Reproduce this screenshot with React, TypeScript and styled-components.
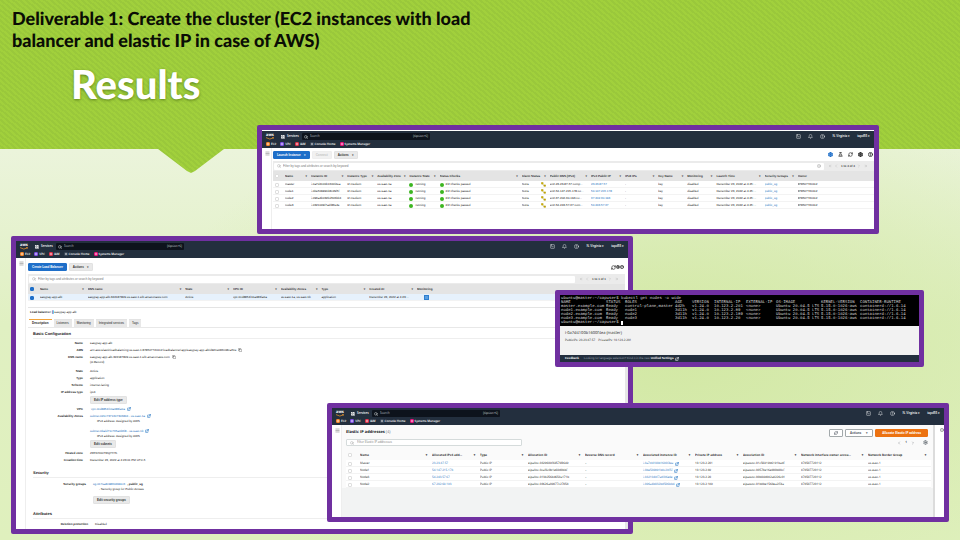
import React from "react";
import styled, { createGlobalStyle, css } from "styled-components";
import {
  Bell,
  ChevronLeft,
  ChevronRight,
  ChevronsLeft,
  ChevronsRight,
  CircleHelp,
  Copy,
  ExternalLink,
  FlaskConical,
  Info,
  LayoutGrid,
  Menu,
  RefreshCw,
  Search,
  Settings,
  SquareTerminal,
  CircleX,
} from "lucide-react";

const purple = "#7030a0";
const navy = "#232f3e";
const sans = '"Liberation Sans", Arial, sans-serif';
const open = '"Open Sans", "Noto Sans", sans-serif';
const mono = '"Liberation Mono", "Courier New", monospace';

const GlobalStyle = createGlobalStyle`
  *, *::before, *::after { box-sizing: border-box; }
  body { margin: 0; font-family: ${sans}; text-rendering: geometricPrecision; }
  button, input { font: inherit; color: inherit; margin: 0; padding: 0; border: 0; background: none; }
  svg { flex: none; display: block; }
  a { text-decoration: none; }
`;

const Slide = styled.main`
  position: relative;
  min-height: 100vh;
  overflow: hidden;
  background:
    radial-gradient(ellipse at 70% 65%, #d2e8a4 0%, rgba(210, 232, 164, 0) 55%),
    linear-gradient(180deg, #ebf4db 28%, #e0f0c2 60%, #dff0bd 100%);
`;

const Banner = styled.header`
  height: 173px;
  padding: 7px 12px;
  background: repeating-linear-gradient(40deg, #9ac83b 0 2px, #a1d03c 2px 4px);
  clip-path: polygon(0 0, 100% 0, 100% 149px, 224px 149px, 195px 171px, 191px 173px, 187px 171px, 158px 149px, 0 149px);
`;

const Deliverable = styled.p`
  margin: 0;
  max-width: 480px;
  font: 900 18px/22px Lato, sans-serif;
  color: #0a0d05;
`;

const Title = styled.h1`
  margin: 8px 0 0 59px;
  font: 900 40px/50px Lato, sans-serif;
  color: #fff;
  text-shadow: 0 1px 3px rgba(50, 80, 0, 0.6);
`;

const Shot = styled.section<{ $top: number; $left: number; $right: number; $min: number; $z?: number; $inset?: number }>`
  position: absolute;
  top: ${(p) => p.$top}px;
  left: ${(p) => p.$left}px;
  right: ${(p) => p.$right}px;
  min-height: ${(p) => p.$min}px;
  z-index: ${(p) => p.$z ?? 1};
  display: flex;
  flex-direction: column;
  padding-top: ${(p) => p.$inset ?? 0}px;
  border: 5px solid ${purple};
  border-radius: 2px;
  background: #fff;
  font-size: 3px;
  line-height: 5px;
  color: #222;
  overflow: hidden;
`;

/* Console navigation */
const Nav = styled.nav`
  height: 17px;
  padding: 2px 4px 0;
  background: ${navy};
  color: #fff;
  font-family: ${open};
  font-weight: 600;
`;

const NavRow = styled.div`
  display: flex;
  align-items: center;
  height: 7px;
`;

const Logo = styled.a`
  display: flex;
  flex-direction: column;
  width: 15px;
  color: #fff;
  font: 700 4px/3px ${open};
`;

const Services = styled.button`
  display: flex;
  align-items: center;
  gap: 2px;
  width: 21px;
`;

const NavSearch = styled.label`
  display: flex;
  align-items: center;
  gap: 2px;
  width: 128px;
  height: 7px;
  padding: 0 2px;
  border-radius: 1px;
  background: #0d131c;
  color: #d5dbdb;
  font-weight: 400;
  input { flex: 1; min-width: 0; height: 5px; outline: 0; }
  input::placeholder { color: #b4bbc4; opacity: 1; }
`;

const NavRight = styled.div`
  display: flex;
  align-items: center;
  gap: 7px;
  margin-left: auto;
`;

const NavButton = styled.button`
  display: block;
  white-space: nowrap;
`;

const Favourites = styled.div`
  display: flex;
  align-items: center;
  gap: 4px;
  height: 8px;
`;

const Favourite = styled.a`
  display: flex;
  align-items: center;
  gap: 1px;
  color: #fff;
  white-space: nowrap;
`;

const Chip = styled.span<{ $c: string }>`
  width: 4px;
  height: 4px;
  border-radius: 1px;
  background: ${(p) => p.$c};
  border: 1px solid ${(p) => p.$c};
  box-shadow: inset 0 0 0 1px rgba(255, 255, 255, 0.45);
`;

function ConsoleNav() {
  return (
    <Nav>
      <NavRow>
        <Logo href="#" aria-label="aws home">
          <span>aws</span>
          <svg width="8" height="3" viewBox="0 0 8 3">
            <path d="M0 .6Q4 3.4 7.2.9M6 .4l1.5 0-.3 1.4" fill="none" stroke="#f29a2e" strokeWidth=".7" />
          </svg>
        </Logo>
        <Services>
          <LayoutGrid size={4} strokeWidth={4} />
          Services
        </Services>
        <NavSearch>
          <Search size={4} strokeWidth={3} />
          <input placeholder="Search" aria-label="Search services" />
          [Option+S]
        </NavSearch>
        <NavRight>
          <NavButton aria-label="CloudShell"><SquareTerminal size={5} /></NavButton>
          <NavButton aria-label="Notifications"><Bell size={5} /></NavButton>
          <NavButton aria-label="Help"><CircleHelp size={5} /></NavButton>
          <NavButton>N. Virginia ▾</NavButton>
          <NavButton>tapd55 ▾</NavButton>
        </NavRight>
      </NavRow>
      <Favourites>
        <Favourite href="#"><Chip $c="#f0852c" />EC2</Favourite>
        <Favourite href="#"><Chip $c="#7d4fe0" />VPC</Favourite>
        <Favourite href="#"><Chip $c="#dd344c" />IAM</Favourite>
        <Favourite href="#"><Chip $c="#3b4858" />Console Home</Favourite>
        <Favourite href="#"><Chip $c="#e7157b" />Systems Manager</Favourite>
      </Favourites>
    </Nav>
  );
}

/* Page body */
const Body = styled.div`
  flex: 1;
  display: flex;
`;

const Rail = styled.aside`
  width: 10px;
  padding: 3px 0 0 3px;
  border-right: 1px solid #eee;
  background: #fff;
  color: #555;
`;

const Content = styled.div<{ $pad?: number }>`
  flex: 1;
  min-width: 0;
  padding-left: ${(p) => p.$pad ?? 1}px;
`;

const Toolbar = styled.div<{ $top: number; $h: number }>`
  display: flex;
  align-items: center;
  gap: 2px;
  height: ${(p) => p.$h}px;
  padding: ${(p) => p.$top}px 1px 0 0;
`;

const Button = styled.button<{ $kind?: "blue" | "orange" | "outline" | "off" }>`
  display: flex;
  align-items: center;
  justify-content: center;
  gap: 3px;
  height: 8px;
  padding: 0 3px;
  border: 1px solid #e2e2e2;
  border-radius: 1px;
  background: #e9e9e9;
  color: #333;
  font-weight: 700;
  line-height: 6px;
  white-space: nowrap;
  ${(p) => p.$kind === "blue" && css`background: #1f6fc9; border-color: #1f6fc9; color: #fff;`}
  ${(p) => p.$kind === "off" && css`background: #f1f1f1; border-color: #eee; color: #c4c4c4;`}
  ${(p) => p.$kind === "outline" && css`background: #fff; border-color: #a3a9ab; color: #545b64; gap: 4px; padding: 0 4px;`}
  ${(p) => p.$kind === "orange" && css`background: #ec7211; border-color: #ec7211; color: #fff; padding: 0 6px;`}
`;

const Tools = styled.div<{ $gap: number }>`
  display: flex;
  align-items: center;
  gap: ${(p) => p.$gap}px;
  margin-left: auto;
  color: #333;
  button { display: block; }
`;

const FilterBar = styled.div`
  display: flex;
  align-items: center;
  height: 10px;
  padding: 0 6px 0 1px;
  background: #ebebeb;
`;

const Filter = styled.label`
  flex: 1;
  display: flex;
  align-items: center;
  gap: 2px;
  height: 7px;
  padding: 0 3px;
  border-radius: 1px;
  background: #fff;
  color: #888;
  input { flex: 1; min-width: 0; height: 5px; outline: 0; }
  input::placeholder { color: #777; opacity: 1; }
`;

const Pager = styled.div`
  display: flex;
  align-items: center;
  justify-content: space-between;
  width: 44px;
  padding-left: 4px;
  color: #aaa;
  button { display: block; }
  strong { color: #444; }
`;

const Table = styled.table<{ $look?: "new" }>`
  width: 100%;
  table-layout: fixed;
  border-collapse: collapse;
  th, td { padding: 0; text-align: left; white-space: nowrap; overflow: hidden; }
  th { height: 10px; background: ${(p) => (p.$look ? "#fafafa" : "#e4e4e4")}; color: #333; }
  td { height: 7px; background: #fff; box-shadow: inset 0 -1px #f3f3f3; }
  tr[aria-selected="true"] td { background: #e6f1fc; }
  td a, td a:visited { color: #1f73c0; }
`;

const Col = styled.col<{ $part: number }>`
  width: ${(p) => p.$part}%;
`;

const Cell = styled.div<{ $spread?: boolean }>`
  display: flex;
  align-items: center;
  gap: 2px;
  line-height: 5px;
  padding-right: 4px;
  justify-content: ${(p) => (p.$spread ? "space-between" : "flex-start")};
`;

const Tick = styled.input`
  appearance: none;
  display: block;
  width: 4px;
  height: 4px;
  margin-left: 2px;
  border: 1px solid #dedede;
  border-radius: 1px;
  background: #fff;
  &:checked { background: #1f6fc9; border-color: #1f6fc9; }
`;

const MonitorBox = styled.button`
  width: 5px;
  height: 5px;
  margin-left: 7px;
  border: 1px solid #2f7fd0;
  background: #5b9fe0;
`;

const Dot = styled.span`
  width: 4px;
  height: 4px;
  border-radius: 50%;
  background: #3cb521;
`;

function Grid(props: {
  label: string;
  widths: number[];
  heads: string[];
  rows: React.ReactNode[][];
  look?: "new";
  checked?: boolean;
}) {
  const total = props.widths.reduce((a, b) => a + b, 0);
  return (
    <Table $look={props.look} aria-label={props.label}>
      <colgroup>
        {props.widths.map((w, i) => <Col key={i} $part={(w / total) * 100} />)}
      </colgroup>
      <thead>
        <tr>
          <th><Tick type="checkbox" aria-label="Select all" defaultChecked={props.checked} /></th>
          {props.heads.map((h) => (
            <th key={h}><Cell $spread>{h}{h !== "Owner" && h !== "Monitoring" || props.look ? <span>{props.look ? "▼" : "▾"}</span> : null}</Cell></th>
          ))}
        </tr>
      </thead>
      <tbody>
        {props.rows.map((r, i) => (
          <tr key={i} aria-selected={!!props.checked}>
            <td><Tick type="checkbox" aria-label={"Select row " + (i + 1)} defaultChecked={props.checked} /></td>
            {r.map((c, j) => <td key={j}>{typeof c === "string" ? <Cell>{c}</Cell> : c}</td>)}
          </tr>
        ))}
      </tbody>
    </Table>
  );
}

const AlarmIcon = () => (
  <svg width="5" height="5" viewBox="0 0 6 6">
    <path d="M.5.5h2v2h-2zM2 2.500l2 2M3.500 3.500h2v1.700h-2z" fill="#e0bf00" stroke="#a8920a" strokeWidth=".6" />
  </svg>
);

const ok = (t: string) => <Cell><Dot />{t}</Cell>;
const link = (t: string, out?: boolean) => (
  <Cell><a href="#">{t}</a>{out && <ExternalLink size={4} strokeWidth={3} color="#1f73c0" />}</Cell>
);

const instances = [
  ["master", "i-0a7d4100b1600f4ea", "ec2-23-23-87-57.comp...", "23.23.87.57"],
  ["node1", "i-0be509991b8c29f5f", "ec2-54-147-215-178.co...", "54.147.215.178"],
  ["node2", "i-096a4b032bd506bb4", "ec2-67-202-60-193.co...", "67.202.60.193"],
  ["node3", "i-0321049f7adf86e4e", "ec2-54-243-57-67.com...", "54.243.57.67"],
].map(([name, id, dns, ip]) => [
  name,
  id,
  "t2.medium",
  "us-east-1a",
  ok("running"),
  ok("2/2 checks passed"),
  <Cell $spread>None<AlarmIcon /></Cell>,
  dns,
  link(ip),
  "-",
  "key",
  "disabled",
  "December 23, 2022 at 4:45:...",
  link("public_sg"),
  "878507720112",
]);

const PagerControls = ({ text }: { text: string }) => (
  <Pager>
    <button aria-label="First page"><ChevronsLeft size={4} /></button>
    <button aria-label="Previous page"><ChevronLeft size={4} /></button>
    <strong>{text}</strong>
    <button aria-label="Next page"><ChevronRight size={4} /></button>
    <button aria-label="Last page"><ChevronsRight size={4} /></button>
  </Pager>
);

function Instances() {
  return (
    <Shot $top={125} $left={257} $right={81} $min={109} $inset={1} aria-label="EC2 instances">
      <ConsoleNav />
      <Body>
        <Rail><Menu size={5} /></Rail>
        <Content>
          <Toolbar $top={0} $h={13}>
            <Button $kind="blue">Launch Instance <span>▾</span></Button>
            <Button $kind="off">Connect</Button>
            <Button>Actions <span>▾</span></Button>
            <Tools $gap={5}>
              <button aria-label="Preferences"><Settings size={5} strokeWidth={5} color="#1f6fc9" /></button>
              <button aria-label="Experiments"><FlaskConical size={5} strokeWidth={3} /></button>
              <button aria-label="Refresh"><RefreshCw size={5} strokeWidth={3} /></button>
              <button aria-label="Settings"><Settings size={5} strokeWidth={5} /></button>
              <button aria-label="Help"><CircleHelp size={5} strokeWidth={4} /></button>
            </Tools>
          </Toolbar>
          <FilterBar>
            <Filter>
              <Search size={4} />
              <input placeholder="Filter by tags and attributes or search by keyword" aria-label="Filter instances" />
              <CircleX size={4} />
            </Filter>
            <PagerControls text="1 to 4 of 4" />
          </FilterBar>
          <Grid
            label="Instances"
            widths={[12, 26, 36, 30, 32, 30, 82, 28, 41, 34, 33, 29, 29, 48, 33, 76]}
            heads={["Name", "Instance ID", "Instance Type", "Availability Zone", "Instance State", "Status Checks", "Alarm Status", "Public DNS (IPv4)", "IPv4 Public IP", "IPv6 IPs", "Key Name", "Monitoring ", "Launch Time", "Security Groups", "Owner"]}
            rows={instances}
          />
        </Content>
      </Body>
    </Shot>
  );
}

/* Load balancer detail */
const Splitter = styled.div`
  margin-top: 6px;
  border-top: 1px solid #e4e4e4;
`;

const LbTitle = styled.p`
  margin: 2px 0 4px 2px;
  i { color: #1f73c0; }
`;

const Tabs = styled.div`
  display: flex;
  gap: 2px;
  padding-left: 1px;
  border-bottom: 1px solid #e8e8e8;
`;

const Tab = styled.button<{ $on?: boolean }>`
  height: 8px;
  padding: 0 3px;
  border-top: 1px solid ${(p) => (p.$on ? "#f2a33a" : "#e3e3e3")};
  background: ${(p) => (p.$on ? "#fff" : "#e8e8e8")};
  font-weight: ${(p) => (p.$on ? 700 : 400)};
  line-height: 7px;
`;

const SectionTitle = styled.h2<{ $above?: number; $below?: number }>`
  margin: ${(p) => p.$above ?? 3}px 0 ${(p) => p.$below ?? 2}px 5px;
  padding-bottom: 1px;
  border-bottom: 1px solid #eee;
  font-size: 4px;
  line-height: 6px;
`;

const Facts = styled.dl<{ $label: number }>`
  display: grid;
  grid-template-columns: ${(p) => p.$label}px 1fr;
  gap: 2px 7px;
  margin: 0;
  dt { text-align: right; font-weight: 700; }
  dd { margin: 0; }
  a { color: #1f73c0; }
`;

const Line = styled.div<{ $in?: number; $after?: number }>`
  display: flex;
  gap: 2px;
  padding-left: ${(p) => p.$in ?? 0}px;
  margin-bottom: ${(p) => p.$after ?? 0}px;
`;

const EditButton = styled(Button)`
  margin: 1px 0;
`;

const Scroll = styled.div`
  width: 3px;
  margin-top: 50px;
  background: #e6e6e6;
`;

const out = <ExternalLink size={4} strokeWidth={3} color="#1f73c0" />;

function LoadBalancer() {
  return (
    <Shot $top={236} $left={11} $right={327} $min={298} aria-label="Load balancer">
      <ConsoleNav />
      <Body>
        <Rail><Menu size={5} /></Rail>
        <Content $pad={2}>
          <Toolbar $top={2} $h={16}>
            <Button $kind="blue">Create Load Balancer</Button>
            <Button>Actions <span>▾</span></Button>
            <Tools $gap={0}>
              <button aria-label="Refresh"><RefreshCw size={5} strokeWidth={3} /></button>
              <button aria-label="Settings"><Settings size={4} strokeWidth={5} /></button>
              <button aria-label="Help"><CircleHelp size={4} strokeWidth={4} /></button>
            </Tools>
          </Toolbar>
          <FilterBar>
            <Filter>
              <Search size={4} />
              <input placeholder="Filter by tags and attributes or search by keyword" aria-label="Filter load balancers" />
            </Filter>
            <PagerControls text="1 to 1 of 1" />
          </FilterBar>
          <Grid
            label="Load balancers"
            checked
            widths={[12, 48, 98, 48, 48, 41, 48, 48, 209]}
            heads={["Name", "DNS name", "State", "VPC ID", "Availability Zones", "Type", "Created At", "Monitoring"]}
            rows={[[
              "easypay-app-alb",
              "easypay-app-alb-322187809.us-east-1.elb.amazonaws.com",
              "Active",
              "vpc-0cd8854f10a483fa0a",
              "us-east-1a, us-east-1b",
              "application",
              "December 23, 2022 at 4:23:...",
              <Cell><MonitorBox aria-label="Open monitoring" /></Cell>,
            ]]}
          />
          <Splitter />
          <LbTitle><b>Load balancer:</b> <i>▌</i>easypay-app-alb</LbTitle>
          <Tabs role="tablist">
            <Tab role="tab" $on aria-selected>Description</Tab>
            <Tab role="tab">Listeners</Tab>
            <Tab role="tab">Monitoring</Tab>
            <Tab role="tab">Integrated services</Tab>
            <Tab role="tab">Tags</Tab>
          </Tabs>
          <SectionTitle>Basic Configuration</SectionTitle>
          <Facts $label={55}>
            <dt>Name</dt><dd>easypay-app-alb</dd>
            <dt>ARN</dt>
            <dd><Line>arn:aws:elasticloadbalancing:us-east-1:878507720112:loadbalancer/app/easypay-app-alb/d921e086c08ca51e<Copy size={4} /></Line></dd>
            <dt>DNS name</dt>
            <dd>
              <Line>easypay-app-alb-322187809.us-east-1.elb.amazonaws.com<Copy size={4} /></Line>
              <Line $after={2}>(A Record)</Line>
            </dd>
            <dt>State</dt><dd>Active</dd>
            <dt>Type</dt><dd>application</dd>
            <dt>Scheme</dt><dd>internet-facing</dd>
            <dt>IP address type</dt><dd>ipv4<EditButton>Edit IP address type</EditButton></dd>
            <dt>VPC</dt><dd><Line $in={1}><a href="#">vpc-0cd8854f10a483fa0a</a>{out}</Line></dd>
            <dt>Availability Zones</dt>
            <dd>
              <Line><a href="#">subnet-021c7371607306844 - us-east-1a</a>{out}</Line>
              <Line $in={7} $after={5}>IPv4 address: Assigned by AWS</Line>
              <Line><a href="#">subnet-0bafd71c765a0b6f8 - us-east-1b</a>{out}</Line>
              <Line $in={7}>IPv4 address: Assigned by AWS</Line>
              <EditButton>Edit subnets</EditButton>
            </dd>
            <dt>Hosted zone</dt><dd>Z35SXDOTRQ7X7K</dd>
            <dt>Creation time</dt><dd>December 23, 2022 at 4:23:01 PM UTC-5</dd>
          </Facts>
          <SectionTitle $above={7} $below={4}>Security</SectionTitle>
          <Facts $label={58}>
            <dt>Security groups</dt>
            <dd>
              <Line><a href="#">sg-017ea8c98604991c6</a><b>, public_sg</b></Line>
              <Line $in={6} $after={4}>- Security group for Public Access</Line>
              <EditButton>Edit security groups</EditButton>
            </dd>
          </Facts>
          <SectionTitle $above={6} $below={3}>Attributes</SectionTitle>
          <Facts $label={60}>
            <dt>Deletion protection</dt><dd>Disabled</dd>
          </Facts>
        </Content>
        <Scroll />
      </Body>
    </Shot>
  );
}

/* Terminal */
const Screen = styled.div`
  height: 31px;
  padding: 2px 0 0 1px;
  background: #000;
  color: #d8d8d8;
  font: 4px/4px ${mono};
  table { width: 100%; table-layout: fixed; border-collapse: collapse; }
  th, td { padding: 0; height: 4px; text-align: left; font-weight: 400; white-space: nowrap; }
`;

const Prompt = styled.div`
  display: flex;
  gap: 2px;
`;

const Cursor = styled.span`
  width: 2px;
  height: 4px;
  background: #fff;
`;

const Session = styled.div`
  flex: 1;
  min-height: 29px;
  padding: 5px;
  background: #f2f2f2;
  font-family: ${open};
  h2 { margin: 0 0 2px; font-size: 4px; line-height: 5px; font-weight: 400; }
  p { margin: 0; display: flex; gap: 3px; }
`;

const Footer = styled.footer`
  display: flex;
  align-items: center;
  gap: 5px;
  height: 7px;
  padding: 0 5px;
  background: ${navy};
  color: #9aa4b0;
  a { color: #fff; font-weight: 700; }
  p { display: flex; align-items: center; gap: 1px; margin: 0; }
`;

const nodeWidths = [45, 19, 50, 17, 22, 32, 30, 45, 39, 59];
const nodeHeads = ["NAME", "STATUS", "ROLES", "AGE", "VERSION", "INTERNAL-IP", "EXTERNAL-IP", "OS-IMAGE", "KERNEL-VERSION", "CONTAINER-RUNTIME"];
const nodes = [
  ["master", "control-plane,master", "4d2h", "10.123.2.201"],
  ["node1", "node1", "3d11h", "10.123.2.89"],
  ["node2", "node2", "3d11h", "10.123.2.189"],
  ["node3", "node3", "3d11h", "10.123.2.20"],
];

function Terminal() {
  return (
    <Shot $top={290} $left={555} $right={36} $min={77} $z={2} aria-label="Terminal session">
      <Screen>
        <Prompt>ubuntu@master:~/capuser$ kubectl get nodes -o wide</Prompt>
        <table>
          <colgroup>{nodeWidths.map((w, i) => <Col key={i} $part={(w / 358) * 100} />)}</colgroup>
          <thead><tr>{nodeHeads.map((h) => <th key={h}>{h}</th>)}</tr></thead>
          <tbody>
            {nodes.map(([n, role, age, ip]) => (
              <tr key={n}>
                <td>{n}.example.com</td><td>Ready</td><td>{role}</td><td>{age}</td><td>v1.24.0</td><td>{ip}</td>
                <td>&lt;none&gt;</td><td>Ubuntu 20.04.5 LTS</td><td>5.15.0-1026-aws</td><td>containerd://1.6.14</td>
              </tr>
            ))}
          </tbody>
        </table>
        <Prompt>ubuntu@master:~/capuser$ <Cursor /></Prompt>
      </Screen>
      <Session>
        <h2>i-0a7d4100b1600f4ea (master)</h2>
        <p><span>PublicIPs: 23.23.87.57</span><span>PrivateIPs: 10.123.2.201</span></p>
      </Session>
      <Footer>
        <a href="#">Feedback</a>
        <p>Looking for language selection? Find it in the new <a href="#">Unified Settings</a><ExternalLink size={4} strokeWidth={3} color="#fff" /></p>
      </Footer>
    </Shot>
  );
}

/* Elastic IPs */
const IpContent = styled(Content)`
  padding-left: 0;
  background: #f2f3f3;
  font-family: ${open};
`;

const IpPanel = styled.div`
  padding: 3px 2px 0 4px;
  background: #fafafa;
`;

const IpHead = styled.div`
  display: flex;
  align-items: center;
  gap: 2px;
  height: 9px;
  padding-right: 3px;
  h2 { flex: 1; margin: 0; font-size: 4px; line-height: 6px; color: #16191f; }
  h2 span { font-weight: 400; color: #687078; }
`;

const IpFilterRow = styled.div`
  display: flex;
  align-items: center;
  justify-content: space-between;
  height: 13px;
  padding: 0 3px 2px 0;
`;

const IpFilter = styled(Filter)`
  flex: 0 1 176px;
  border: 1px solid #d5dbdb;
  gap: 3px;
`;

const IpPager = styled.div`
  display: flex;
  align-items: center;
  gap: 4px;
  color: #545b64;
  button { display: block; }
  button:last-child { margin-left: 4px; }
`;

const InfoRail = styled.aside`
  width: 11px;
  padding: 3px 0 0 5px;
  border-left: 2px solid #dcdcdc;
  background: #fff;
`;

const addresses = [
  ["Master", "23.23.87.57", "eipalloc-0329609f69579B649", "i-0a7d4100b1600f4ea", "10.123.2.201", "eipassoc-01c56919b6191badf"],
  ["Node1", "54.147.215.178", "eipalloc-0caf6c0b1e60d0bbf", "i-0be509991b8c29f5f", "10.123.2.89", "eipassoc-00578e16e000b00cf"],
  ["Node3", "54.243.57.67", "eipalloc-013b256b4650a171b", "i-0321049f7adf86e4e", "10.123.2.20", "eipassoc-00b04d082a8226c01"],
  ["Node2", "67.202.60.193", "eipalloc-03626a09077c27058", "i-096a4b032bd506bb4", "10.123.2.189", "eipassoc-01b8be1560ea2ff4a"],
].map(([name, ip, alloc, inst, priv, assoc]) => [
  name, link(ip), "Public IP", alloc, "–", link(inst, true), priv, assoc, "878507720112", "us-east-1",
]);

function ElasticIps() {
  return (
    <Shot $top={403} $left={327} $right={11} $min={119} $z={2} aria-label="Elastic IP addresses">
      <ConsoleNav />
      <Body>
        <Rail><Menu size={5} /></Rail>
        <IpContent>
          <IpPanel>
            <IpHead>
              <h2>Elastic IP addresses <span>(4)</span></h2>
              <Button $kind="outline" aria-label="Refresh"><RefreshCw size={4} strokeWidth={3} /></Button>
              <Button $kind="outline">Actions <span>▼</span></Button>
              <Button $kind="orange">Allocate Elastic IP address</Button>
            </IpHead>
            <IpFilterRow>
              <IpFilter>
                <Search size={4} />
                <input placeholder="Filter Elastic IP addresses" aria-label="Filter Elastic IP addresses" />
              </IpFilter>
              <IpPager>
                <button aria-label="Previous page"><ChevronLeft size={4} /></button>
                <b>1</b>
                <button aria-label="Next page"><ChevronRight size={4} /></button>
                <button aria-label="Settings"><Settings size={5} strokeWidth={3} /></button>
              </IpPager>
            </IpFilterRow>
            <Grid
              look="new"
              label="Elastic IP addresses"
              widths={[14, 72, 48, 48, 57, 58, 52, 48, 58, 67, 63]}
              heads={["Name", "Allocated IPv4 add...", "Type", "Allocation ID", "Reverse DNS record", "Associated instance ID", "Private IP address", "Association ID", "Network interface owner accou...", "Network Border Group"]}
              rows={addresses}
            />
          </IpPanel>
        </IpContent>
        <InfoRail><Info size={4} /></InfoRail>
      </Body>
    </Shot>
  );
}

export default function App() {
  return (
    <>
      <GlobalStyle />
      <Slide>
        <Banner>
          <Deliverable>Deliverable 1: Create the cluster (EC2 instances with load balancer and elastic IP in case of AWS)</Deliverable>
          <Title>Results</Title>
        </Banner>
        <Instances />
        <LoadBalancer />
        <Terminal />
        <ElasticIps />
      </Slide>
    </>
  );
}
